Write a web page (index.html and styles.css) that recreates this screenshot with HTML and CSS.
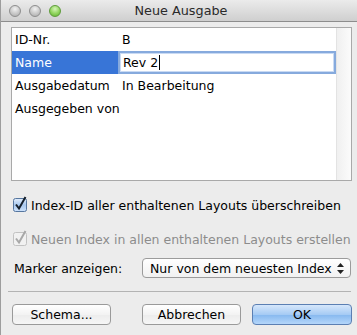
FILE: index.html
```html
<!DOCTYPE html>
<html>
<head>
    <title>Neue Ausgabe</title>
    <link rel="stylesheet" href="styles.css">
</head>
<body>
    <div class="window">
        <div class="titlebar">
            <div class="lights">
                <span class="light"></span>
                <span class="light"></span>
                <span class="light green"></span>
            </div>
            <div class="title">Neue Ausgabe</div>
            <div></div>
        </div>

        <div class="content">
            <div class="table-box">
                <div class="rows">
                    <div class="row">
                        <span class="label">ID-Nr.</span>
                        <span class="value">B</span>
                    </div>
                    <div class="row selected">
                        <span class="label">Name</span>
                        <div class="edit">Rev 2<span class="caret"></span></div>
                    </div>
                    <div class="row">
                        <span class="label">Ausgabedatum</span>
                        <span class="value">In Bearbeitung</span>
                    </div>
                    <div class="row">
                        <span class="label">Ausgegeben von</span>
                        <span class="value"></span>
                    </div>
                </div>
                <div class="scrollbar"></div>
            </div>

            <div class="check first">
                <svg class="box" width="14" height="14" viewBox="0 0 14 14">
                    <defs>
                        <linearGradient id="cbOn" x1="0" y1="0" x2="0" y2="1">
                            <stop offset="0" stop-color="#e3eefc"/>
                            <stop offset="0.5" stop-color="#a8c8ef"/>
                            <stop offset="1" stop-color="#cfe3fb"/>
                        </linearGradient>
                    </defs>
                    <rect x="0.5" y="0.5" width="13" height="13" rx="2" fill="url(#cbOn)" stroke="#56769f"/>
                    <path d="M3 6.5 L6 10.5 L12.5 -1" fill="none" stroke="#16202c" stroke-width="2"/>
                </svg>
                <span>Index-ID aller enthaltenen Layouts überschreiben</span>
            </div>

            <div class="check disabled">
                <svg class="box" width="14" height="14" viewBox="0 0 14 14">
                    <rect x="0.5" y="0.5" width="13" height="13" rx="2" fill="#f1f1f1" stroke="#c2c2c2"/>
                    <path d="M3 6.5 L6 10.5 L12.5 -1" fill="none" stroke="#a8a8a8" stroke-width="2"/>
                </svg>
                <span>Neuen Index in allen enthaltenen Layouts erstellen</span>
            </div>

            <div class="marker-row">
                <span class="marker-label">Marker anzeigen:</span>
                <div class="popup">
                    <span>Nur von dem neuesten Index</span>
                    <svg width="7" height="11" viewBox="0 0 7 11">
                        <path d="M3.5 0 L7 4 L0 4 Z M3.5 11 L7 7 L0 7 Z" fill="#222"/>
                    </svg>
                </div>
            </div>

            <div class="separator"></div>

            <div class="buttons">
                <div class="btn">Schema...</div>
                <div class="btn cancel">Abbrechen</div>
                <div class="btn default">OK</div>
            </div>
        </div>
    </div>
</body>
</html>
```

FILE: styles.css
```css
body {
    margin: 0;
    background: #ececec;
    font-family: "DejaVu Sans", "Liberation Sans", sans-serif;
    font-size: 12.5px;
    color: #000;
}
.window {
    width: 357px;
    height: 335px;
    box-sizing: border-box;
    border-left: 1px solid #9d9d9d;
    background: #ececec;
}
.titlebar {
    height: 21px;
    border-bottom: 1px solid #8d8d8d;
    background: linear-gradient(#ebebeb, #cfcfcf);
    display: grid;
    grid-template-columns: 1fr auto 1fr;
    align-items: center;
}
.lights {
    display: flex;
    gap: 8px;
    padding-left: 8px;
}
.light {
    width: 12px;
    height: 12px;
    box-sizing: border-box;
    border-radius: 50%;
    border: 1px solid #8e8e8e;
    background: radial-gradient(circle at 50% 30%, #f2f2f2 0%, #c8c8c8 55%, #a9a9a9 100%);
}
.light.green {
    border-color: #5e9c3a;
    background: radial-gradient(circle at 50% 30%, #d6f5b8 0%, #8fd45c 55%, #5fae32 100%);
}
.title {
    font-size: 12.8px;
    color: #2a2a2a;
    padding-left: 4px;
}
.content {
    padding-top: 5px;
}
.table-box {
    margin-left: 10px;
    width: 341px;
    height: 154px;
    box-sizing: border-box;
    border: 1px solid #a9a9a9;
    background: #fff;
    display: flex;
}
.rows {
    flex: 1;
}
.row {
    height: 23px;
    display: flex;
    align-items: center;
}
.label {
    width: 103px;
    padding-left: 3px;
    flex-shrink: 0;
    white-space: nowrap;
}
.value {
    padding-left: 4px;
}
.row.selected {
    background: #3875d7;
}
.row.selected .label {
    color: #fff;
}
.edit {
    flex: 1;
    align-self: stretch;
    box-sizing: border-box;
    background: #fff;
    border: 2px solid #86aadd;
    box-shadow: inset 0 0 0 1px #c9daf3;
    padding-left: 3px;
    display: flex;
    align-items: center;
}
.caret {
    width: 1px;
    height: 15px;
    background: #000;
    margin-left: 1px;
}
.scrollbar {
    width: 14px;
    border-left: 1px solid #e3e3e3;
    background: linear-gradient(to right, #f0f0f0, #fbfbfb);
}
.check {
    display: flex;
    align-items: center;
    gap: 4px;
    height: 18px;
    padding-left: 12px;
    margin-top: 16px;
    white-space: nowrap;
}
.check.first {
    margin-top: 15px;
}
.check .box {
    overflow: visible;
    flex-shrink: 0;
}
.check.disabled {
    color: #8c8c8c;
}
.marker-row {
    display: flex;
    align-items: center;
    margin-top: 10px;
    padding-left: 13px;
}
.marker-label {
    width: 128px;
    white-space: nowrap;
}
.popup {
    width: 209px;
    height: 20px;
    box-sizing: border-box;
    border: 1px solid #9b9b9b;
    border-radius: 4px;
    background: linear-gradient(#ffffff, #f1f1f1);
    display: flex;
    align-items: center;
    justify-content: space-between;
    padding: 0 6px 0 7px;
    white-space: nowrap;
}
.separator {
    margin: 13px 6px 0 7px;
    height: 1px;
    background: #b3b3b3;
}
.buttons {
    display: flex;
    padding-left: 11px;
    margin-top: 12px;
}
.btn {
    width: 99px;
    height: 21px;
    box-sizing: border-box;
    border: 1px solid #9a9a9a;
    border-radius: 4px;
    background: linear-gradient(#ffffff, #f3f3f3 50%, #ececec 51%, #f6f6f6);
    display: flex;
    align-items: center;
    justify-content: center;
}
.btn.cancel {
    margin-left: 31px;
}
.btn.default {
    width: 100px;
    margin-left: 11px;
    border-color: #5b7fb3;
    background: linear-gradient(#d6e7fb, #a6cbf4 50%, #86b8ef 51%, #b4d6fa);
}
```
